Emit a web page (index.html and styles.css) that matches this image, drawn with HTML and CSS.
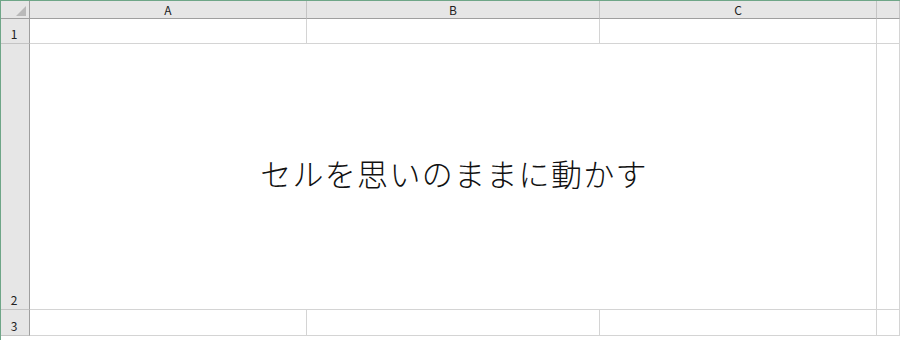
FILE: index.html
```html
<!DOCTYPE html>
<html lang="ja">

<head>
    <meta charset="UTF-8">
    <title>セルを思いのままに動かす</title>
    <link rel="stylesheet" href="styles.css">
</head>

<body>
    <div class="sheet">
        <div class="corner"><span class="corner-mark"></span></div>
        <div class="col-head">A</div>
        <div class="col-head">B</div>
        <div class="col-head">C</div>
        <div class="col-head"></div>

        <div class="row-head">1</div>
        <div class="cell"></div>
        <div class="cell"></div>
        <div class="cell"></div>
        <div class="cell"></div>

        <div class="row-head">2</div>
        <div class="cell merged">セルを思いのままに動かす</div>
        <div class="cell"></div>

        <div class="row-head">3</div>
        <div class="cell"></div>
        <div class="cell"></div>
        <div class="cell"></div>
        <div class="cell"></div>
    </div>
</body>

</html>
```

FILE: styles.css
```css
body {
    margin: 0;
    padding: 0;
    background-color: #ffffff;
    font-family: "Noto Sans CJK JP", "Noto Sans", sans-serif;
    overflow: hidden;
}

.sheet {
    display: grid;
    grid-template-columns: 29px 277px 293px 277px 1fr;
    grid-template-rows: 18px 25px 266px 26px;
    border-top: 1px solid #6fa688;
    border-left: 1px solid #6fa688;
    height: 340px;
    box-sizing: border-box;
}

.corner,
.col-head {
    background-color: #e6e6e6;
    border-bottom: 1px solid #9f9f9f;
    box-sizing: border-box;
}

.corner {
    position: relative;
    border-right: 1px solid #9f9f9f;
}

/* select-all triangle */
.corner-mark {
    position: absolute;
    right: 3px;
    bottom: 2px;
    width: 0;
    height: 0;
    border-left: 10px solid transparent;
    border-bottom: 10px solid #b9b9b9;
}

.col-head {
    border-right: 1px solid #c4c4c4;
    display: flex;
    align-items: center;
    justify-content: center;
    font-size: 12px;
    color: #222;
    line-height: 1;
}

.row-head {
    background-color: #e6e6e6;
    border-right: 1px solid #9f9f9f;
    border-bottom: 1px solid #c4c4c4;
    box-sizing: border-box;
    display: flex;
    align-items: flex-end;
    justify-content: center;
    padding-bottom: 3px;
    padding-right: 2px;
    font-size: 12px;
    color: #222;
    line-height: 1;
}

.cell {
    border-right: 1px solid #d4d4d4;
    border-bottom: 1px solid #d4d4d4;
    box-sizing: border-box;
}

.merged {
    grid-column: 2 / 5;
    display: flex;
    align-items: center;
    justify-content: center;
    font-size: 31px;
    font-weight: 300;
    letter-spacing: 1.3px;
    color: #111;
    padding-left: 2px;
    padding-bottom: 8px;
}
```
